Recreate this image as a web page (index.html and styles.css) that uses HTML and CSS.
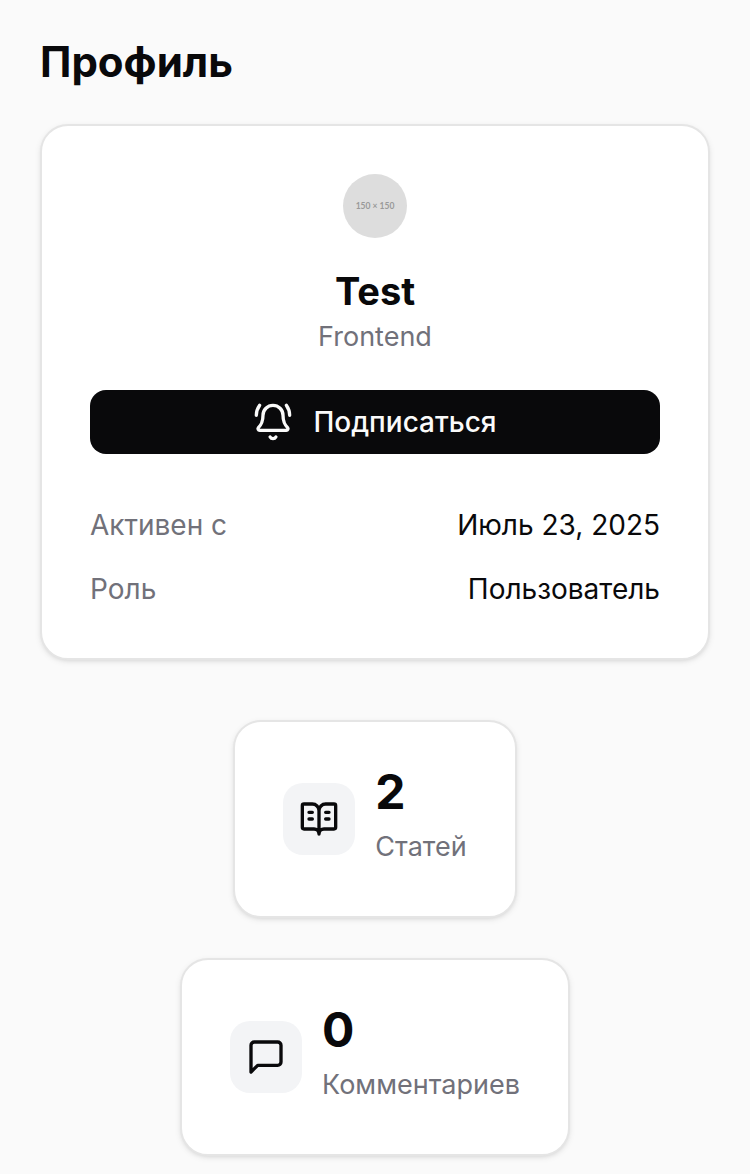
FILE: index.html
```html
<!DOCTYPE html>
<html lang="ru">
<head>
<meta charset="utf-8">
<meta name="viewport" content="width=device-width, initial-scale=1">
<title>Профиль</title>
<link rel="stylesheet" href="styles.css">
</head>
<body>
<main class="page">
  <h1 class="page-title">Профиль</h1>
  <section class="card profile">
    <svg class="avatar" viewBox="0 0 150 150" role="img" aria-label="150 × 150">
      <circle cx="75" cy="75" r="75" fill="#ddd"/>
      <text class="avatar-text" x="75" y="82" text-anchor="middle">150 × 150</text>
    </svg>
    <h2 class="name">Test</h2>
    <p class="job">Frontend</p>
    <button class="subscribe" type="button">
      <svg class="icon bell" viewBox="0 0 24 24" aria-hidden="true"><path d="M10.268 21a2 2 0 0 0 3.464 0M22 8c0-2.300-.8-4.300-2-6M3.262 15.326A1 1 0 0 0 4 17h16a1 1 0 0 0 .740-1.673C19.410 13.956 18 12.499 18 8A6 6 0 0 0 6 8c0 4.499-1.411 5.956-2.738 7.326M4 2C2.800 3.700 2 5.700 2 8"/></svg>
      <span>Подписаться</span>
    </button>
    <dl class="details">
      <div class="detail"><dt>Активен с</dt><dd>Июль 23, 2025</dd></div>
      <div class="detail"><dt>Роль</dt><dd>Пользователь</dd></div>
    </dl>
  </section>
  <section class="stats">
    <article class="card stat">
      <span class="tile"><svg class="icon" viewBox="0 0 24 24" aria-hidden="true"><path d="M12 7v14M16 12h2M16 8h2M3 18a1 1 0 0 1-1-1V4a1 1 0 0 1 1-1h5a4 4 0 0 1 4 4 4 4 0 0 1 4-4h5a1 1 0 0 1 1 1v13a1 1 0 0 1-1 1h-6a3 3 0 0 0-3 3 3 3 0 0 0-3-3zM6 12h2M6 8h2"/></svg></span>
      <div><p class="count">2</p><p class="label">Статей</p></div>
    </article>
    <article class="card stat">
      <span class="tile"><svg class="icon" viewBox="0 0 24 24" aria-hidden="true"><path d="M21 15a2 2 0 0 1-2 2H7l-4 4V5a2 2 0 0 1 2-2h14a2 2 0 0 1 2 2z"/></svg></span>
      <div><p class="count">0</p><p class="label">Комментариев</p></div>
    </article>
  </section>
</main>
</body>
</html>
```
FILE: styles.css
```css
* { box-sizing: border-box; }
body {
  margin: 0;
  background: #fafafa;
  color: #09090b;
  font: 28px/42px Inter, "Liberation Sans", sans-serif;
}
h1, h2, p, dl, dd { margin: 0; }
.page { padding: 32px 40px 18px; }
.page-title { margin-bottom: 32px; font-size: 42px; line-height: 60px; font-weight: 700; }
.card {
  background: #fff;
  border: 2px solid #e5e5e5;
  border-radius: 28px;
  box-shadow: 0 2px 6px rgba(0, 0, 0, .08), 0 2px 4px -2px rgba(0, 0, 0, .1);
}
.profile { display: flex; flex-direction: column; align-items: center; padding: 48px; }
.avatar { width: 64px; height: 64px; margin-bottom: 26px; }
.avatar-text { font: 700 20px Lato, sans-serif; fill: #999; }
.name { font-size: 38px; line-height: 54px; font-weight: 700; }
.job { margin-bottom: 34px; color: #71717a; font-size: 27px; line-height: 38px; }
.subscribe {
  display: flex;
  align-items: center;
  justify-content: center;
  gap: 20px;
  width: 100%;
  height: 64px;
  border: 0;
  border-radius: 16px;
  background: #09090b;
  color: #fafafa;
  font: inherit;
  font-weight: 500;
}
.icon { width: 40px; height: 40px; fill: none; stroke: currentColor; stroke-width: 2; stroke-linecap: round; stroke-linejoin: round; }
.details { display: grid; gap: 22px; width: 100%; margin-top: 50px; }
.detail { display: flex; justify-content: space-between; }
dt, .label { color: #71717a; }
.stats { display: flex; flex-direction: column; align-items: center; gap: 40px; margin-top: 60px; }
.stat { display: flex; align-items: center; gap: 20px; padding: 48px; }
.tile { display: grid; place-items: center; width: 72px; height: 72px; border-radius: 20px; background: #f3f4f6; }
.count { margin-bottom: 12px; font-size: 48px; line-height: 44px; font-weight: 700; }
.label { font-size: 27px; }
```
